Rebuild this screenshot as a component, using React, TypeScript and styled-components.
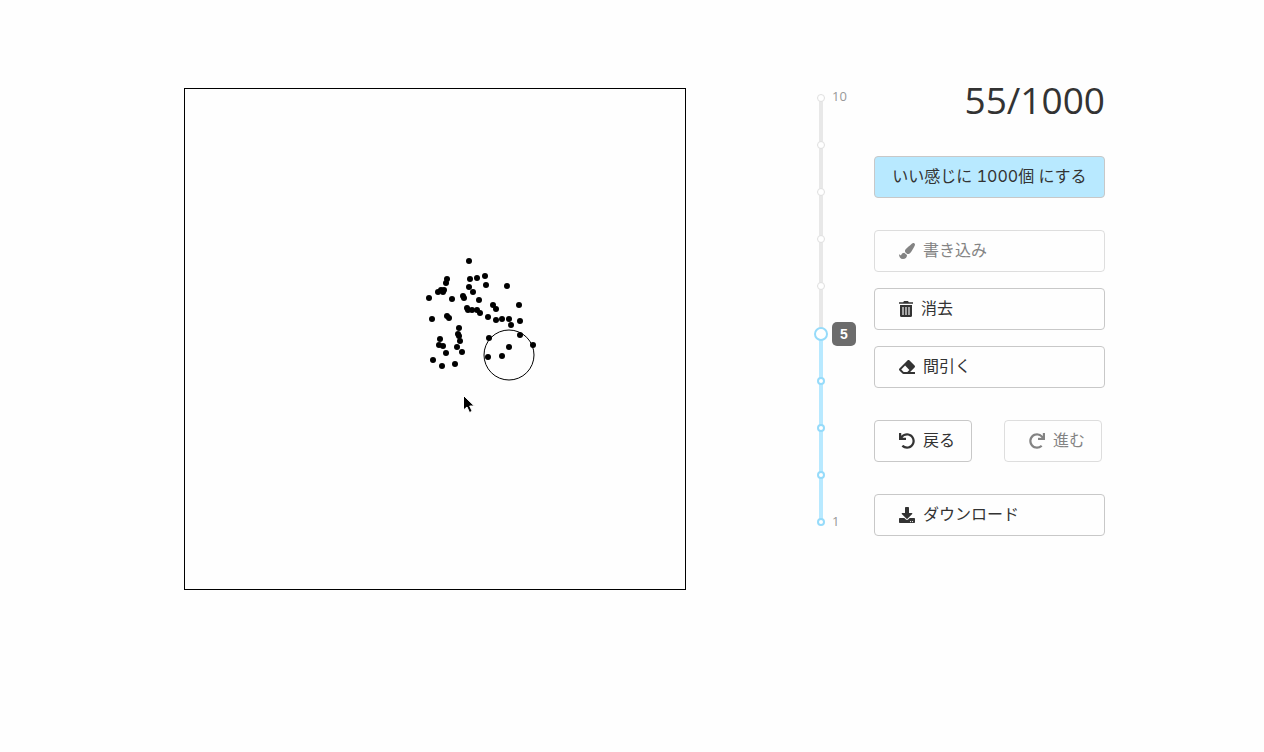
import React, { useState } from "react";
import styled, { createGlobalStyle } from "styled-components";
import { FaPaintBrush, FaEraser, FaUndo, FaRedo, FaDownload } from "react-icons/fa";

const GlobalStyle = createGlobalStyle`
  *, *::before, *::after { box-sizing: border-box; }
  body {
    margin: 0;
    background: #fefefe;
    color: #333;
    font-family: Inter, "Noto Sans CJK JP", sans-serif;
    font-size: 16px;
    font-variant-numeric: tabular-nums;
    line-height: 24px;
  }
`;

const Page = styled.main`
  display: flex;
  align-items: flex-start;
  justify-content: space-between;
  max-width: 960px;
  margin: 0 auto;
  padding: 88px 7px 32px 32px;
`;

const Board = styled.svg`
  display: block;
  flex: none;
  border: 1px solid #000;
  overflow: visible;
`;

const Side = styled.div`
  display: flex;
  align-items: flex-start;
  gap: 14px;
`;

const SliderBox = styled.div`
  position: relative;
  display: grid;
  grid-template-columns: 14px 28px;
  column-gap: 4px;
  margin-top: 3px;
`;

const Rail = styled.div`
  grid-area: 1 / 1;
  justify-self: center;
  display: flex;
  align-items: flex-end;
  width: 4px;
  margin: 7px 0;
  background: #e8e8e8;
`;

const Fill = styled.div`
  width: 100%;
  background: #b8e9ff;
`;

const Stops = styled.div`
  grid-area: 1 / 1;
  display: flex;
  flex-direction: column;
  align-items: center;
  justify-content: space-between;
  margin: 3px 0;
`;

const Stop = styled.span<{ $active: boolean }>`
  width: 8px;
  height: 8px;
  border: ${(p) => (p.$active ? "2px solid #96dbfa" : "1px solid #e0e0e0")};
  border-radius: 50%;
  background: #fff;
`;

const Range = styled.input`
  grid-area: 1 / 1;
  z-index: 1;
  width: 14px;
  height: 438px;
  margin: 0;
  appearance: none;
  background: transparent;
  writing-mode: vertical-lr;
  direction: rtl;
  cursor: pointer;

  &::-webkit-slider-thumb {
    appearance: none;
    width: 14px;
    height: 14px;
    border: 2px solid #96dbfa;
    border-radius: 50%;
    background: #fff;
  }
`;

const Marks = styled.div`
  grid-area: 1 / 2;
  display: flex;
  flex-direction: column;
  justify-content: space-between;
  padding-bottom: 3px;
  color: #999;
  font-family: "Open Sans", sans-serif;
  font-size: 13px;
  line-height: 10px;
`;

const Tip = styled.output`
  position: absolute;
  left: 18px;
  width: 24px;
  height: 24px;
  border-radius: 5px;
  background: #6c6c6c;
  color: #fff;
  font: bold 14px/24px "Liberation Sans", sans-serif;
  text-align: center;
  transform: translateY(50%);
`;

const Panel = styled.div`
  display: flex;
  flex-direction: column;
  gap: 32px;
  width: 231px;
`;

const Count = styled.h1`
  margin: -8px 0 4px;
  font-family: "Open Sans", sans-serif;
  font-size: 37px;
  font-weight: 400;
  line-height: 40px;
  text-align: right;
`;

const Tools = styled.div`
  display: flex;
  flex-direction: column;
  gap: 16px;
`;

const History = styled.div`
  display: flex;
  gap: 32px;
`;

const Button = styled.button<{ $primary?: boolean }>`
  display: flex;
  align-items: center;
  justify-content: ${(p) => (p.$primary ? "center" : "flex-start")};
  gap: 8px;
  height: 42px;
  padding: ${(p) => (p.$primary ? "0 16px" : "0 16px 0 24px")};
  border: 1px solid #c8c8c8;
  border-radius: 4px;
  background: ${(p) => (p.$primary ? "#b8e9ff" : "transparent")};
  color: inherit;
  font: inherit;
  font-variant-numeric: tabular-nums;
  white-space: nowrap;
  cursor: pointer;

  &:disabled {
    opacity: 0.6;
    cursor: default;
  }
`;

const Label = styled.span`
  padding-bottom: 2px;
`;

const TrashIcon = () => (
  <svg width="14" height="16" viewBox="0 0 14 16" fill="currentColor" aria-hidden="true">
    <path d="M0 1.200h4.200L5 0h4l.8 1.200H14v1.600H0z" />
    <path d="M1 4h12v10.500a1.500 1.500 0 0 1-1.500 1.500h-9a1.500 1.500 0 0 1-1.500-1.500z" />
    <path d="M3 6h2v8H3zM6 6h2v8H6zM9 6h2v8H9z" fill="#a4a4a4" />
  </svg>
);

const points = [
  [284, 172], [285, 190], [292, 189], [300, 187], [301, 196], [322, 197], [262, 190], [261, 194],
  [284, 198], [288, 203], [253, 203], [256, 201], [258, 203], [259, 201], [244, 209], [267, 210],
  [278, 207], [279, 209], [294, 211], [308, 216], [311, 220], [334, 216], [282, 219], [283, 221],
  [287, 221], [292, 221], [295, 224], [247, 230], [262, 227], [264, 229], [303, 228], [311, 231],
  [317, 230], [324, 230], [335, 232], [326, 236], [274, 239], [273, 245], [274, 247], [275, 252],
  [255, 250], [254, 256], [258, 257], [272, 258], [261, 264], [277, 263], [248, 271], [257, 277],
  [270, 275], [304, 249], [335, 246], [348, 256], [324, 258], [317, 267], [303, 268],
];

const MIN = 1;
const MAX = 10;
const levels = [10, 9, 8, 7, 6, 5, 4, 3, 2, 1];

export default function App() {
  const [size, setSize] = useState(5);
  const ratio = (size - MIN) / (MAX - MIN);

  return (
    <>
      <GlobalStyle />
      <Page>
        <Board width="502" height="502" viewBox="0 0 500 500" role="img" aria-label="canvas">
          {points.map(([x, y], i) => (
            <circle key={i} cx={x} cy={y} r="3" />
          ))}
          <circle cx="324" cy="266" r="25" fill="none" stroke="#000" />
          <path
            d="M278.500 306.500v14.500l3.500-3 2.500 5.500 2.700-1.200-2.500-5.300h4.600z"
            fill="#000"
            stroke="#fff"
            strokeWidth="1"
          />
        </Board>

        <Side>
          <SliderBox>
            <Rail>
              <Fill style={{ height: `${ratio * 100}%` }} />
            </Rail>
            <Stops>
              {levels.map((n) => (
                <Stop key={n} $active={n <= size} />
              ))}
            </Stops>
            <Range
              type="range"
              aria-label="size"
              min={MIN}
              max={MAX}
              value={size}
              onChange={(e) => setSize(Number(e.target.value))}
            />
            <Marks>
              <span>{MAX}</span>
              <span>{MIN}</span>
            </Marks>
            <Tip style={{ bottom: 7 + Math.round(ratio * 424) }}>{size}</Tip>
          </SliderBox>

          <Panel>
            <Count>{points.length}/1000</Count>
            <Button $primary><Label>いい感じに 1000個 にする</Label></Button>
            <Tools>
              <Button disabled><FaPaintBrush /><Label>書き込み</Label></Button>
              <Button><TrashIcon /><Label>消去</Label></Button>
              <Button><FaEraser /><Label>間引く</Label></Button>
            </Tools>
            <History>
              <Button><FaUndo /><Label>戻る</Label></Button>
              <Button disabled><FaRedo /><Label>進む</Label></Button>
            </History>
            <Button><FaDownload /><Label>ダウンロード</Label></Button>
          </Panel>
        </Side>
      </Page>
    </>
  );
}
